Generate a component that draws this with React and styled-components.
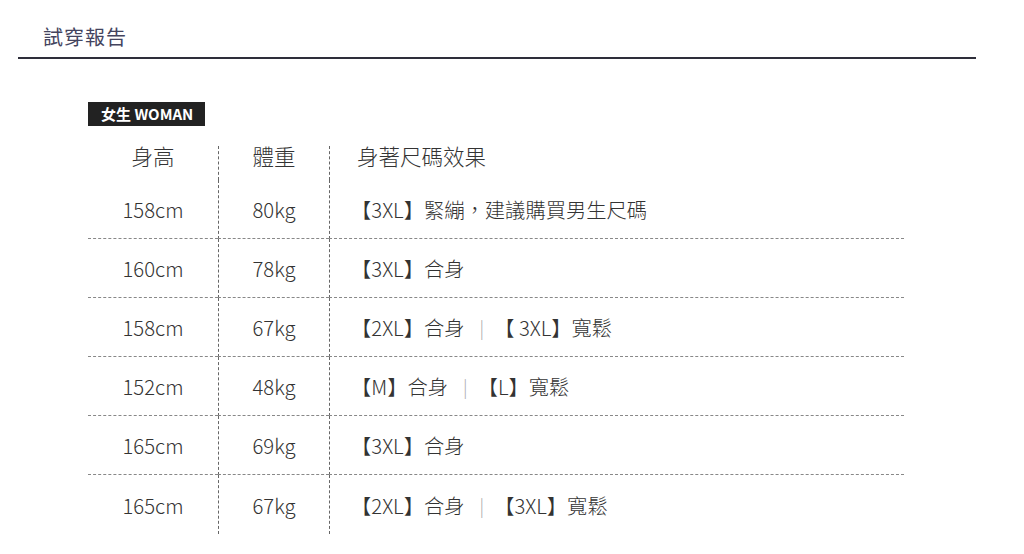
import React from "react";
import styled, { createGlobalStyle } from "styled-components";

const GlobalStyle = createGlobalStyle`
  body {
    margin: 0;
    background: #fff;
    font-family: "Noto Sans CJK TC", "Noto Sans", sans-serif;
    color: #333;
  }
`;

const StyledPage = styled.div`
  width: 958px;
  margin-left: 18px;
  padding-top: 23px;
`;

const StyledTitle = styled.h2`
  margin: 0;
  padding: 0 0 6px 25px;
  font-size: 20px;
  line-height: 28px;
  font-weight: 400;
  letter-spacing: 1px;
  color: #44445e;
  border-bottom: 2px solid #2e2e3a;
`;

const StyledSection = styled.div`
  margin: 42px 0 0 70px;
  width: 816px;
`;

const StyledBadge = styled.div`
  display: inline-block;
  height: 24px;
  line-height: 24px;
  padding: 0 12px 0 13px;
  background-color: #222;
  color: #fff;
  font-size: 15px;
  font-weight: 700;
`;

const StyledTable = styled.div`
  margin-top: 20px;
  display: grid;
  grid-template-columns: 130px 111px 1fr;
`;

const StyledCell = styled.div`
  display: flex;
  align-items: ${(p) => (p.head ? "flex-start" : "center")};
  justify-content: ${(p) => (p.wide ? "flex-start" : "center")};
  height: ${(p) => (p.head ? "34px" : "59px")};
  padding-left: ${(p) => (p.wide ? (p.head ? "27px" : "21px") : "0")};
  font-size: ${(p) => (p.head ? "21.5px" : "20.3px")};
  line-height: 20px;
  font-weight: 300;
  color: #333;
  white-space: pre;
  border-left: ${(p) => (p.first ? "none" : "1px dashed #666")};
  border-bottom: ${(p) => (p.line ? "1px dashed #888" : "none")};
  box-sizing: border-box;
`;

const StyledSep = styled.span`
  margin: 0 10px 0 15px;
  color: #aaa;
  font-size: 18px;
`;

const rows = [
  { h: "158cm", w: "80kg", fit: ["【3XL】緊繃，建議購買男生尺碼"] },
  { h: "160cm", w: "78kg", fit: ["【3XL】合身"] },
  { h: "158cm", w: "67kg", fit: ["【2XL】合身", "【 3XL】寬鬆"] },
  { h: "152cm", w: "48kg", fit: ["【M】合身", "【L】寬鬆"] },
  { h: "165cm", w: "69kg", fit: ["【3XL】合身"] },
  { h: "165cm", w: "67kg", fit: ["【2XL】合身", "【3XL】寬鬆"] },
];

function App() {
  return (
    <StyledPage>
      <GlobalStyle />
      <StyledTitle>試穿報告</StyledTitle>
      <StyledSection>
        <StyledBadge>女生 WOMAN</StyledBadge>
        <StyledTable>
          <StyledCell head first>身高</StyledCell>
          <StyledCell head>體重</StyledCell>
          <StyledCell head wide>身著尺碼效果</StyledCell>
          {rows.map((r, i) => {
            const line = i < rows.length - 1;
            return (
              <React.Fragment key={i}>
                <StyledCell first line={line}>{r.h}</StyledCell>
                <StyledCell line={line}>{r.w}</StyledCell>
                <StyledCell wide line={line}>
                  {r.fit[0]}
                  {r.fit[1] && (
                    <>
                      <StyledSep>|</StyledSep>
                      {r.fit[1]}
                    </>
                  )}
                </StyledCell>
              </React.Fragment>
            );
          })}
        </StyledTable>
      </StyledSection>
    </StyledPage>
  );
}

export default App;
